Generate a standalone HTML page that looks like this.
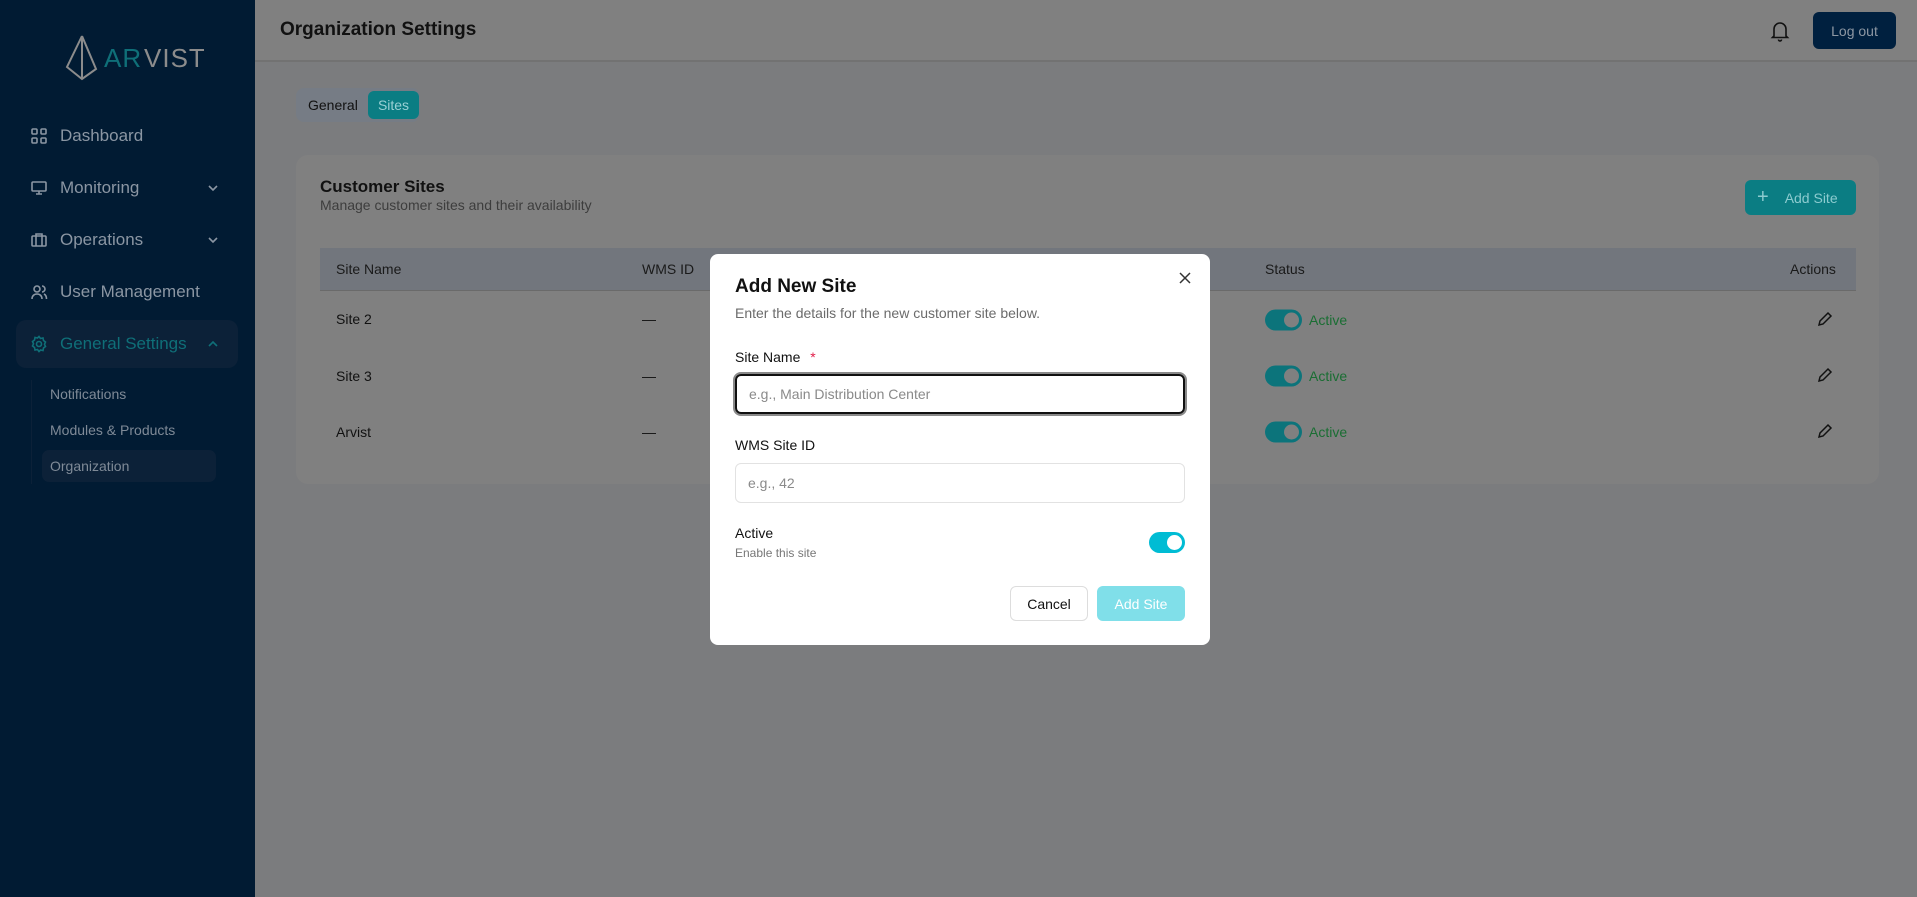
<!DOCTYPE html>
<html><head><meta charset="utf-8"><style>
*{box-sizing:border-box;margin:0;padding:0}
body{width:1917px;height:897px;overflow:hidden;font-family:"Liberation Sans",sans-serif;background:#7b7c7e;position:relative}
.abs{position:absolute}
.sb{left:0;top:0;width:255px;height:897px;background:#011b33}
.nav{position:absolute;left:60px;font-size:17px;color:#8b96a3;transform:translateY(-50%)}
.ico{position:absolute;left:30px;width:18px;height:18px;transform:translateY(-50%)}
.chev{position:absolute;left:207px;transform:translateY(-50%)}
.sub{position:absolute;left:50px;font-size:14px;color:#7f8a97;transform:translateY(-50%)}
.hdr{left:255px;top:0;right:0;height:62px;background:#808080;border-bottom:2px solid #727272}
.card{left:296px;top:155px;width:1583px;height:329px;background:#808080;border-radius:12px}
.th{position:absolute;font-size:14px;color:#1a1a1a;transform:translateY(-50%)}
.td{position:absolute;font-size:14px;color:#111;transform:translateY(-50%)}
.tg{position:absolute;left:1265px;width:37px;height:21px;border-radius:11px;background:#0c747b;transform:translateY(-50%)}
.tg::after{content:"";position:absolute;right:3px;top:3px;width:15px;height:15px;border-radius:50%;background:#808080}
.act{position:absolute;left:1309px;font-size:14px;color:#1a6e33;transform:translateY(-50%)}
.modal{left:710px;top:254px;width:500px;height:391px;background:#fff;border-radius:8px}
.lbl{position:absolute;left:25px;font-size:14px;color:#111}
.inp{position:absolute;left:25px;width:450px;border-radius:6px;font-size:14px;color:#8a8a8a;padding-left:12px;display:flex;align-items:center}
</style></head><body>
<div class="abs sb">
  <svg class="abs" style="left:64px;top:34px" width="140" height="48" viewBox="0 0 140 48">
    <path d="M18 2 L3 33 L18 45 L32 35 L18 2 M18 2 L18 45" fill="none" stroke="#8c8c8c" stroke-width="2"/>
    <text x="40" y="33" font-family="Liberation Sans" font-size="26" fill="#0f6f78" letter-spacing="1">AR</text>
    <text x="80" y="33" font-family="Liberation Sans" font-size="26" fill="#8c8c8c" letter-spacing="1">VIST</text>
  </svg>
  <svg class="ico" style="top:136px" viewBox="0 0 18 18" fill="none" stroke="#8b96a3" stroke-width="1.6"><rect x="2" y="2" width="5" height="5" rx="1"/><rect x="11" y="2" width="5" height="5" rx="1"/><rect x="2" y="11" width="5" height="5" rx="1"/><rect x="11" y="11" width="5" height="5" rx="1"/></svg>
  <div class="nav" style="top:136px">Dashboard</div>
  <svg class="ico" style="top:188px" viewBox="0 0 18 18" fill="none" stroke="#8b96a3" stroke-width="1.6"><rect x="2" y="3" width="14" height="9" rx="1"/><path d="M9 12v3M6 15h6"/></svg>
  <div class="nav" style="top:188px">Monitoring</div>
  <svg class="chev" style="top:188px" width="12" height="8" viewBox="0 0 12 8"><path d="M2 2l4 4 4-4" fill="none" stroke="#8b96a3" stroke-width="1.6"/></svg>
  <svg class="ico" style="top:240px" viewBox="0 0 18 18" fill="none" stroke="#8b96a3" stroke-width="1.6"><rect x="2" y="5" width="14" height="10" rx="1"/><path d="M6 5V3h6v2M6 5v10M12 5v10"/></svg>
  <div class="nav" style="top:240px">Operations</div>
  <svg class="chev" style="top:240px" width="12" height="8" viewBox="0 0 12 8"><path d="M2 2l4 4 4-4" fill="none" stroke="#8b96a3" stroke-width="1.6"/></svg>
  <svg class="ico" style="top:292px" viewBox="0 0 18 18" fill="none" stroke="#8b96a3" stroke-width="1.6"><circle cx="7" cy="6" r="3"/><path d="M2 16c0-3 2-5 5-5s5 2 5 5M12 3a3 3 0 010 6M14 11c2 1 2.5 3 2.5 5"/></svg>
  <div class="nav" style="top:292px">User Management</div>
  <div class="abs" style="left:16px;top:320px;width:222px;height:48px;background:#0c2138;border-radius:10px"></div>
  <svg class="ico" style="top:344px" viewBox="0 0 18 18" fill="none" stroke="#0f6f78" stroke-width="1.6"><circle cx="9" cy="9" r="2.5"/><path d="M9 1.5l1.5 2 2.5-.5.5 2.5 2 1.5-1 2.3 1 2.2-2 1.5-.5 2.5-2.5-.5L9 16.5l-1.5-2-2.5.5-.5-2.5-2-1.5 1-2.2-1-2.3 2-1.5.5-2.5 2.5.5z"/></svg>
  <div class="nav" style="top:344px;color:#0f6f78">General Settings</div>
  <svg class="chev" style="top:344px" width="12" height="8" viewBox="0 0 12 8"><path d="M2 6l4-4 4 4" fill="none" stroke="#0f6f78" stroke-width="1.6"/></svg>
  <div class="abs" style="left:31px;top:380px;width:1px;height:104px;background:#0c2138"></div>
  <div class="abs" style="left:42px;top:450px;width:174px;height:32px;background:#0c2138;border-radius:7px"></div>
  <div class="sub" style="top:394px">Notifications</div>
  <div class="sub" style="top:430px">Modules &amp; Products</div>
  <div class="sub" style="top:466px">Organization</div>
</div>
<div class="abs hdr"></div>
<div class="abs" style="left:280px;top:30px;transform:translateY(-50%);font-size:19px;font-weight:600;color:#111">Organization Settings</div>
<svg class="abs" style="left:1770px;top:20px" width="20" height="22" viewBox="0 0 20 22" fill="none" stroke="#111" stroke-width="1.6"><path d="M4 16V9a6 6 0 0112 0v7l1.5 1.5h-15z"/><path d="M8.5 19.5a1.5 1.5 0 003 0"/></svg>
<div class="abs" style="left:1813px;top:12px;width:83px;height:37px;background:#00203f;border-radius:6px;color:#8d97a3;font-size:14px;display:flex;align-items:center;justify-content:center">Log out</div>
<div class="abs" style="left:296px;top:88px;width:124px;height:34px;background:#767c85;border-radius:8px"></div>
<div class="abs" style="left:308px;top:105px;transform:translateY(-50%);font-size:14px;color:#111">General</div>
<div class="abs" style="left:368px;top:91px;width:51px;height:28px;background:#0b7d83;border-radius:6px;color:#9ad0d4;font-size:14px;display:flex;align-items:center;justify-content:center">Sites</div>
<div class="abs card"></div>
<div class="abs" style="left:320px;top:187px;transform:translateY(-50%);font-size:17px;font-weight:700;color:#111">Customer Sites</div>
<div class="abs" style="left:320px;top:205px;transform:translateY(-50%);font-size:14px;color:#3d3d3d">Manage customer sites and their availability</div>
<div class="abs" style="left:1745px;top:180px;width:111px;height:35px;background:#0b7d83;border-radius:6px;color:#8ccbcf;font-size:14px;display:flex;align-items:center"><span style="font-size:20px;line-height:20px;margin:0 16px 2px 12px">+</span>Add Site</div>
<div class="abs" style="left:320px;top:248px;width:1536px;height:43px;background:#72767d;border-bottom:1px solid #6a6a6a"></div>
<div class="th" style="left:336px;top:269px">Site Name</div>
<div class="th" style="left:642px;top:269px">WMS ID</div>
<div class="th" style="left:1265px;top:269px">Status</div>
<div class="th" style="left:1790px;top:269px">Actions</div>
<div class="td" style="left:336px;top:319px">Site 2</div>
<div class="td" style="left:336px;top:376px">Site 3</div>
<div class="td" style="left:336px;top:432px">Arvist</div>
<div class="td" style="left:642px;top:319px">—</div>
<div class="td" style="left:642px;top:376px">—</div>
<div class="td" style="left:642px;top:432px">—</div>
<div class="tg" style="top:320px"></div><div class="act" style="top:320px">Active</div>
<div class="tg" style="top:376px"></div><div class="act" style="top:376px">Active</div>
<div class="tg" style="top:432px"></div><div class="act" style="top:432px">Active</div>
<svg class="abs" style="left:1816px;top:311px" width="17" height="17" viewBox="0 0 17 17"><path d="M3 14l1-4 8-8 3 3-8 8z" fill="none" stroke="#111" stroke-width="1.5"/></svg>
<svg class="abs" style="left:1816px;top:367px" width="17" height="17" viewBox="0 0 17 17"><path d="M3 14l1-4 8-8 3 3-8 8z" fill="none" stroke="#111" stroke-width="1.5"/></svg>
<svg class="abs" style="left:1816px;top:423px" width="17" height="17" viewBox="0 0 17 17"><path d="M3 14l1-4 8-8 3 3-8 8z" fill="none" stroke="#111" stroke-width="1.5"/></svg>

<div class="abs modal">
  <div class="abs" style="left:25px;top:33px;transform:translateY(-50%);font-size:19px;font-weight:700;color:#111">Add New Site</div>
  <div class="abs" style="left:25px;top:59px;transform:translateY(-50%);font-size:14px;color:#6b6b6b">Enter the details for the new customer site below.</div>
  <svg class="abs" style="left:469px;top:18px" width="12" height="12" viewBox="0 0 12 12"><path d="M1 1l10 10M11 1L1 11" stroke="#333" stroke-width="1.5"/></svg>
  <div class="lbl" style="top:95px">Site Name <span style="color:#e11d48;margin-left:6px">*</span></div>
  <div class="inp" style="top:120px;height:40px;border:2px solid #111;box-shadow:0 0 0 2px #8a8a8a">e.g., Main Distribution Center</div>
  <div class="lbl" style="top:183px">WMS Site ID</div>
  <div class="inp" style="top:209px;height:40px;border:1px solid #e2e2e2">e.g., 42</div>
  <div class="lbl" style="top:271px">Active</div>
  <div class="abs" style="left:25px;top:292px;font-size:12px;color:#777">Enable this site</div>
  <div class="abs" style="left:439px;top:278px;width:36px;height:21px;border-radius:11px;background:#00bcd4"><div style="position:absolute;right:3px;top:3px;width:15px;height:15px;border-radius:50%;background:#fff"></div></div>
  <div class="abs" style="left:300px;top:332px;width:78px;height:35px;border:1px solid #ddd;border-radius:6px;font-size:14px;color:#111;display:flex;align-items:center;justify-content:center">Cancel</div>
  <div class="abs" style="left:387px;top:332px;width:88px;height:35px;background:#80dfe9;border-radius:6px;font-size:14px;color:#fff;display:flex;align-items:center;justify-content:center">Add Site</div>
</div>
</body></html>
